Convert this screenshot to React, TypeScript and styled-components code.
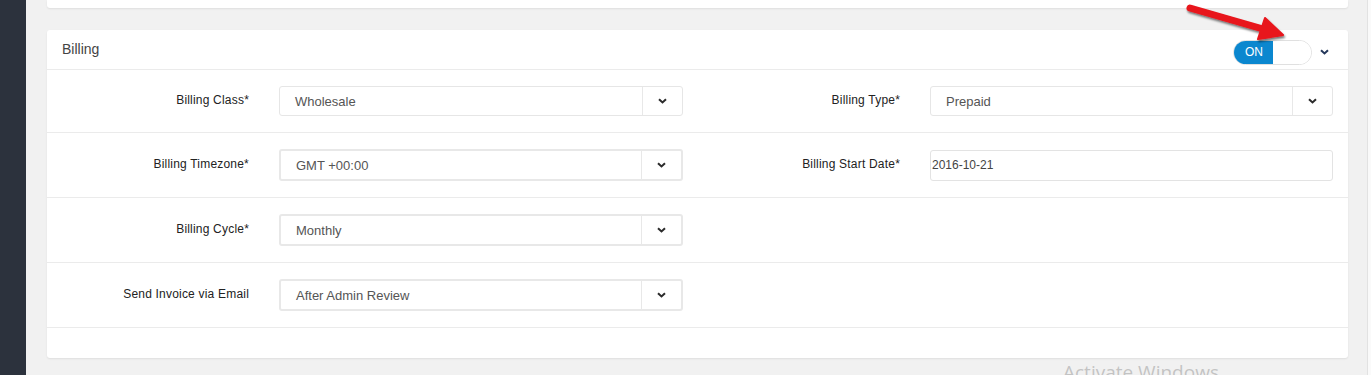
import styled, { createGlobalStyle } from 'styled-components'

const GlobalStyle = createGlobalStyle`
  html, body {
    margin: 0;
    padding: 0;
    background: #f1f1f1;
    font-family: 'Liberation Sans', Arial, sans-serif;
    overflow: hidden;
  }
`

const Chevron = ({ color = '#2b2b2b' }: { color?: string }) => (
  <svg width='9' height='6' viewBox='0 0 9 6'>
    <path d='M1 1.2l3.5 3.3L8 1.2' fill='none' stroke={color} strokeWidth='2' />
  </svg>
)

type SelectProps = { value: string; thick?: boolean }

const SelectBox = ({ value, thick }: SelectProps) => (
  <Select $thick={thick}>
    <SelectValue>{value}</SelectValue>
    <SelectButton>
      <Chevron />
    </SelectButton>
  </Select>
)

type FieldProps = { label: string; children?: React.ReactNode }

const Field = ({ label, children }: FieldProps) => (
  <FieldCol>
    {label && <Label>{label}</Label>}
    {children}
  </FieldCol>
)

const App = () => {
  return (
    <>
      <GlobalStyle />
      <Page>
        <Sidebar />
        <Main>
          <TopCard />
          <Card>
            <CardHeader>
              <Title>Billing</Title>
              <HeaderTools>
                <Toggle>
                  <ToggleOn>ON</ToggleOn>
                  <ToggleOff />
                </Toggle>
                <Collapse>
                  <Chevron color='#24375a' />
                </Collapse>
              </HeaderTools>
            </CardHeader>
            <Row $height={62}>
              <Field label='Billing Class*'>
                <SelectBox value='Wholesale' />
              </Field>
              <Field label='Billing Type*'>
                <SelectBox value='Prepaid' />
              </Field>
            </Row>
            <Row>
              <Field label='Billing Timezone*'>
                <SelectBox value='GMT +00:00' thick />
              </Field>
              <Field label='Billing Start Date*'>
                <DateInput>2016-10-21</DateInput>
              </Field>
            </Row>
            <Row>
              <Field label='Billing Cycle*'>
                <SelectBox value='Monthly' thick />
              </Field>
              <Field label='' />
            </Row>
            <Row>
              <Field label='Send Invoice via Email'>
                <SelectBox value='After Admin Review' thick />
              </Field>
              <Field label='' />
            </Row>
            <CardFooter />
          </Card>
        </Main>
        <ScrollEdge />
        <Arrow width='110' height='44' viewBox='0 0 110 44'>
          <defs>
            <filter id='sh' x='-20%' y='-50%' width='140%' height='200%'>
              <feDropShadow dx='1' dy='2' stdDeviation='1.2' floodColor='#000' floodOpacity='0.55' />
            </filter>
          </defs>
          <g filter='url(#sh)'>
            <path d='M8 8 L81 29' stroke='#e8141b' strokeWidth='7' strokeLinecap='round' />
            <path d='M83 18 L101 35 L76 39 Z' fill='#e8141b' stroke='#e8141b' strokeWidth='2' strokeLinejoin='round' />
          </g>
        </Arrow>
        <Watermark>Activate Windows</Watermark>
      </Page>
    </>
  )
}

const Page = styled.div`
  position: relative;
  display: flex;
  height: 375px;
  background: #f1f1f1;
  overflow: hidden;
`

const Sidebar = styled.div`
  width: 26px;
  flex-shrink: 0;
  background: #2c323d;
`

const Main = styled.div`
  width: 1301px;
  padding-left: 21px;
  display: flex;
  flex-direction: column;
  gap: 22px;
`

const ScrollEdge = styled.div`
  margin-left: auto;
  width: 3px;
  background: #fafafa;
  border-left: 1px solid #e2e2e2;
`

const TopCard = styled.div`
  height: 8px;
  background: #fff;
  border-radius: 0 0 3px 3px;
  box-shadow: 0 1px 2px rgba(0, 0, 0, 0.08);
`

const Card = styled.div`
  background: #fff;
  border-radius: 3px;
  box-shadow: 0 1px 2px rgba(0, 0, 0, 0.08);
`

const CardHeader = styled.div`
  height: 39px;
  display: flex;
  align-items: center;
  justify-content: space-between;
  padding: 0 15px;
  border-bottom: 1px solid #ebebeb;
`

const Title = styled.div`
  font-size: 14px;
  color: #444;
  margin-top: -1px;
`

const HeaderTools = styled.div`
  display: flex;
  align-items: center;
  gap: 8px;
  margin-top: 5px;
  margin-right: 3px;
`

const Toggle = styled.div`
  display: flex;
  width: 79px;
  height: 25px;
  border-radius: 13px;
  border: 1px solid #e0e0e0;
  box-sizing: border-box;
  overflow: hidden;
`

const ToggleOn = styled.div`
  width: 38px;
  background: #0b87cf;
  color: #fff;
  font-size: 12px;
  display: flex;
  align-items: center;
  justify-content: center;
  padding-left: 1px;
`

const ToggleOff = styled.div`
  flex: 1;
  background: #fff;
`

const Collapse = styled.div`
  display: flex;
  align-items: center;
  width: 10px;
`

const Row = styled.div<{ $height?: number }>`
  display: grid;
  grid-template-columns: 651px 650px;
  align-items: center;
  height: ${(p) => p.$height ?? 64}px;
  border-bottom: 1px solid #ebebeb;
`

const FieldCol = styled.div`
  display: grid;
  grid-template-columns: 202px 1fr;
  column-gap: 30px;
  align-items: center;
  padding-right: 15px;
`

const Label = styled.label`
  text-align: right;
  font-size: 12px;
  letter-spacing: 0.2px;
  color: #222;
  margin-top: -3px;
`

const Select = styled.div<{ $thick?: boolean }>`
  display: flex;
  height: ${(p) => (p.$thick ? 32 : 30)}px;
  box-sizing: border-box;
  border: ${(p) => (p.$thick ? '2px solid #e8e8e8' : '1px solid #e6e6e6')};
  border-radius: 3px;
  background: #fff;
`

const SelectValue = styled.div`
  flex: 1;
  display: flex;
  align-items: center;
  padding-left: 15px;
  font-size: 13px;
  color: #555;
`

const SelectButton = styled.div`
  width: 39px;
  display: flex;
  align-items: center;
  justify-content: center;
  border-left: 1px solid #e8e8e8;
`

const DateInput = styled.div`
  height: 31px;
  box-sizing: border-box;
  display: flex;
  align-items: center;
  padding-left: 1px;
  border: 1px solid #e3e3e3;
  border-radius: 3px;
  font-size: 12px;
  color: #444;
`

const CardFooter = styled.div`
  height: 30px;
`

const Arrow = styled.svg`
  position: absolute;
  left: 1182px;
  top: 0;
`

const Watermark = styled.div`
  position: absolute;
  left: 1063px;
  top: 359px;
  font-family: 'Open Sans', sans-serif;
  font-size: 19px;
  color: rgba(180, 180, 180, 0.75);
  white-space: nowrap;
`

export default App
